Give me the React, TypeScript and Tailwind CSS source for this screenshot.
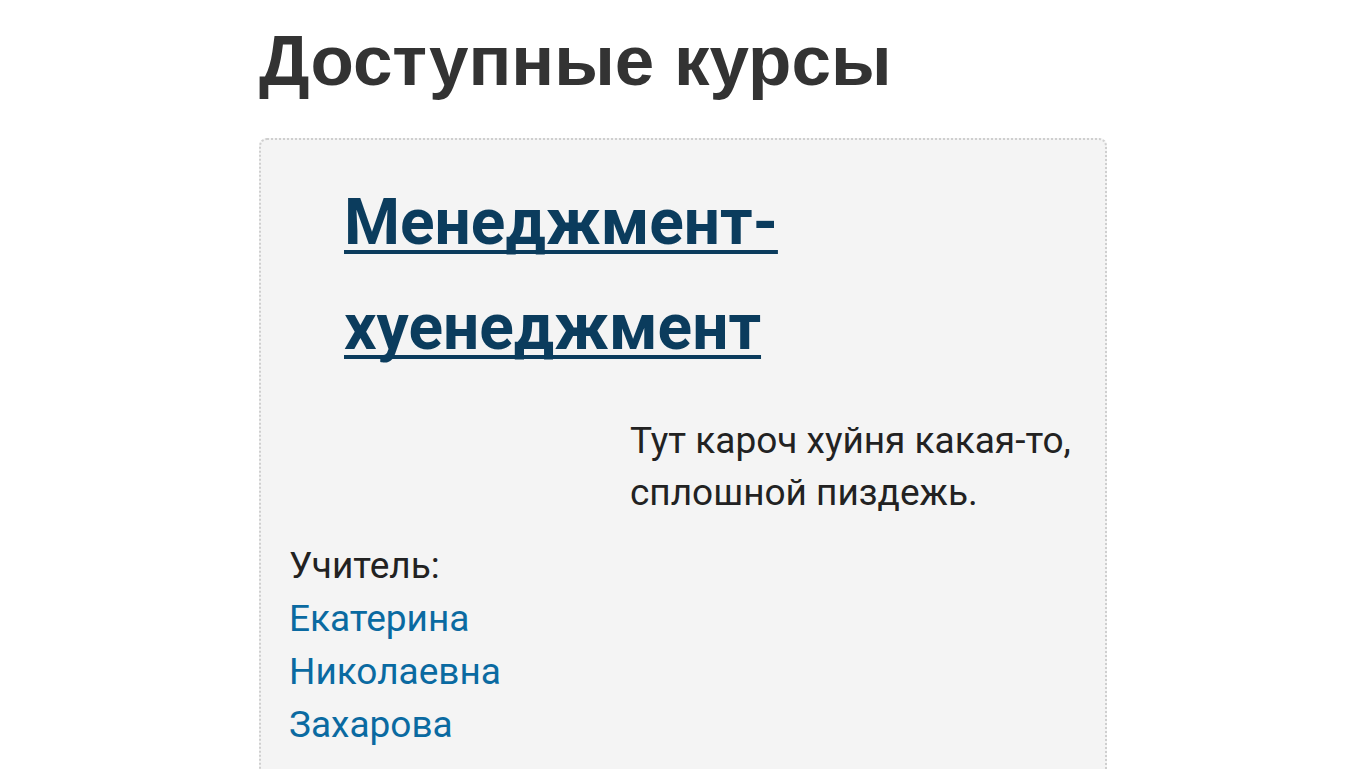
export default function App() {
  return (
    <div className="min-h-screen bg-white overflow-hidden">
      <div className="ml-[259px] w-[848px] pt-[11px]">
        <h1 className="font-['Liberation_Sans',Arial,sans-serif] font-bold text-[71px] leading-[100px] text-[#333333]">
          Доступные курсы
        </h1>

        {/* Course box */}
        <div className="mt-[27px] rounded-[8px] border-2 border-dotted border-[#cfcfcf] bg-[#f4f4f4] pb-10 font-['Roboto',sans-serif]">
          <h3 className="pl-[83px] pr-[300px] pt-[30px] text-[64px] font-bold leading-[105px] text-[#0b3c5d]">
            <a
              href="#"
              className="underline decoration-[4px] underline-offset-[6px] [text-decoration-skip-ink:none]"
            >
              Менеджмент-хуенеджмент
            </a>
          </h3>

          <div className="mt-[35px] pl-[369px] pr-4 text-[37px] leading-[52px] text-[#222222]">
            Тут кароч хуйня какая-то, сплошной пиздежь.
          </div>

          <div className="mt-[20px] w-[330px] pl-[28px] text-[37px] leading-[53px] text-[#222222]">
            Учитель:{" "}
            <a href="#" className="text-[#0a6aa1]">
              Екатерина Николаевна Захарова
            </a>
          </div>
        </div>
      </div>
    </div>
  );
}
